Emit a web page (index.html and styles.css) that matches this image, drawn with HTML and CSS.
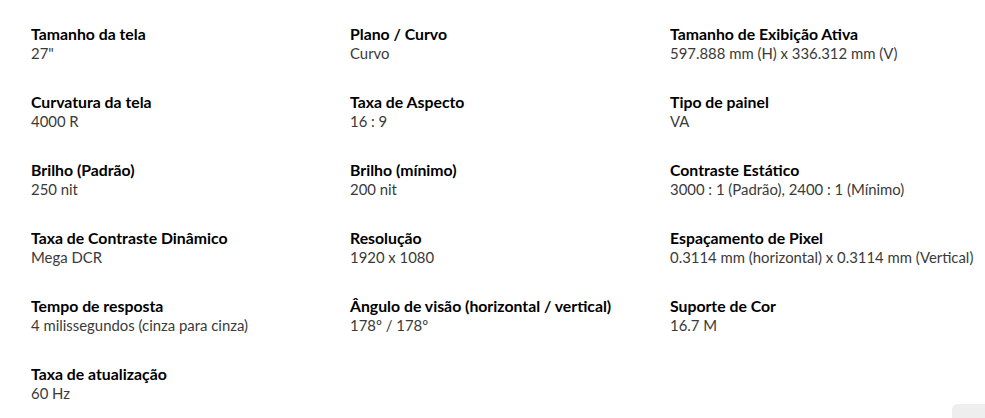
FILE: index.html
```html
<!DOCTYPE html>
<html lang="pt">
<head>
<meta charset="utf-8">
<link rel="stylesheet" href="styles.css">
</head>
<body>
<div class="specs">
  <div class="item"><div class="t">Tamanho da tela</div><div class="v">27"</div></div>
  <div class="item"><div class="t">Plano / Curvo</div><div class="v">Curvo</div></div>
  <div class="item"><div class="t">Tamanho de Exibição Ativa</div><div class="v">597.888 mm (H) x 336.312 mm (V)</div></div>
  <div class="item"><div class="t">Curvatura da tela</div><div class="v">4000 R</div></div>
  <div class="item"><div class="t">Taxa de Aspecto</div><div class="v">16 : 9</div></div>
  <div class="item"><div class="t">Tipo de painel</div><div class="v">VA</div></div>
  <div class="item"><div class="t">Brilho (Padrão)</div><div class="v">250 nit</div></div>
  <div class="item"><div class="t">Brilho (mínimo)</div><div class="v">200 nit</div></div>
  <div class="item"><div class="t">Contraste Estático</div><div class="v">3000 : 1 (Padrão), 2400 : 1 (Mínimo)</div></div>
  <div class="item"><div class="t">Taxa de Contraste Dinâmico</div><div class="v">Mega DCR</div></div>
  <div class="item"><div class="t">Resolução</div><div class="v">1920 x 1080</div></div>
  <div class="item"><div class="t">Espaçamento de Pixel</div><div class="v">0.3114 mm (horizontal) x 0.3114 mm (Vertical)</div></div>
  <div class="item"><div class="t">Tempo de resposta</div><div class="v">4 milissegundos (cinza para cinza)</div></div>
  <div class="item"><div class="t">Ângulo de visão (horizontal / vertical)</div><div class="v">178º / 178º</div></div>
  <div class="item"><div class="t">Suporte de Cor</div><div class="v">16.7 M</div></div>
  <div class="item"><div class="t">Taxa de atualização</div><div class="v">60 Hz</div></div>
</div>
<div class="corner"></div>
</body>
</html>
```
FILE: styles.css
```css
html, body {
  margin: 0;
  padding: 0;
  background: #fff;
  overflow: hidden;
}
body {
  width: 985px;
  height: 418px;
  position: relative;
  font-family: Lato, "Open Sans", sans-serif;
}
.specs {
  display: grid;
  grid-template-columns: 319px 320px 320px;
  row-gap: 29px;
  padding: 24px 0 0 31px;
}
.item {
  height: 39px;
}
.t {
  font-size: 15.8px;
  font-weight: 700;
  color: #000;
  line-height: 19px;
  white-space: nowrap;
}
.v {
  margin-top: 1px;
  font-size: 14.9px;
  color: #3a3a3a;
  line-height: 19px;
  white-space: nowrap;
}
.corner {
  position: absolute;
  left: 952px;
  top: 404px;
  width: 40px;
  height: 20px;
  background: #eeeeef;
  border-radius: 6px 0 0 0;
}
```
